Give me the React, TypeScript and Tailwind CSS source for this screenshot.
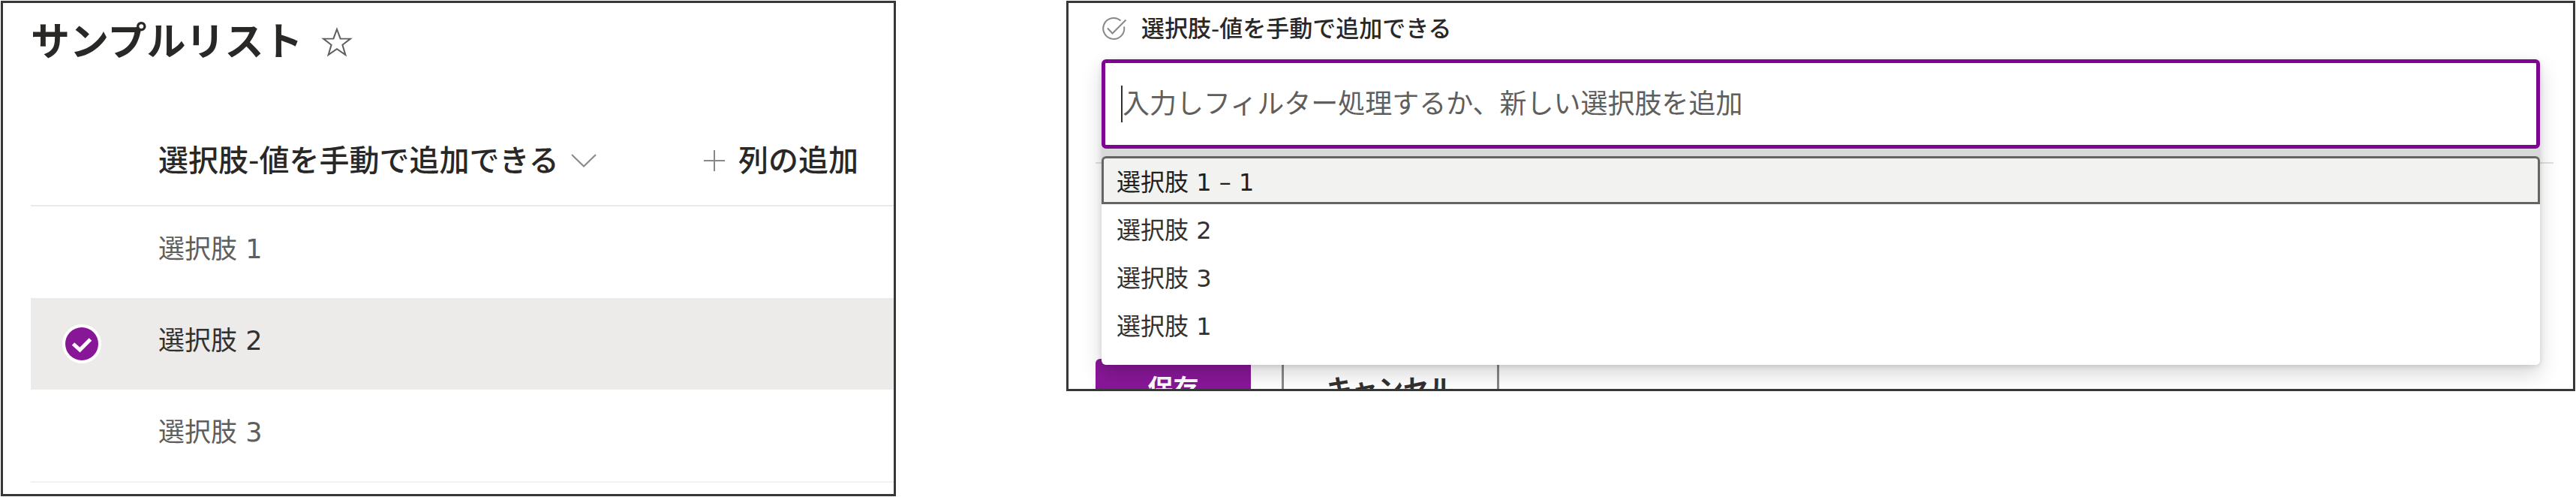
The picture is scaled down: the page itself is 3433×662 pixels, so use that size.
import { useState } from "react";

const rows = ["選択肢 1", "選択肢 2", "選択肢 3"];
const options = ["選択肢 1 – 1", "選択肢 2", "選択肢 3", "選択肢 1"];

function StarIcon() {
  return (
    <svg viewBox="0 0 44 44" className="size-11" fill="none" stroke="#605e5c" strokeWidth="2" aria-hidden="true">
      <path d="M22 5 L26.6 17.4 L40 17.6 L29.4 25.8 L33.4 39 L22 31.2 L10.6 39 L14.6 25.8 L4 17.6 L17.4 17.4 Z" />
    </svg>
  );
}

function ChevronIcon() {
  return (
    <svg viewBox="0 0 34 18" className="h-[18px] w-[34px]" fill="none" stroke="#8a8886" strokeWidth="2" aria-hidden="true">
      <path d="M1 1 L17 16.5 L33 1" />
    </svg>
  );
}

function PlusIcon() {
  return (
    <svg viewBox="0 0 28 28" className="size-7" fill="none" stroke="#8a8886" strokeWidth="2" aria-hidden="true">
      <path d="M14 0 V28 M0 14 H28" />
    </svg>
  );
}

function CheckBadge() {
  return (
    <svg viewBox="0 0 52 52" className="size-[52px] opacity-0 peer-checked:opacity-100" aria-hidden="true">
      <circle cx="26" cy="26" r="26" fill="#ffffff" />
      <circle cx="26" cy="26" r="22" fill="#881798" />
      <path d="M14.5 26 L23.5 34 L37.5 20" fill="none" stroke="#ffffff" strokeWidth="5" />
    </svg>
  );
}

function ChoiceIcon() {
  return (
    <svg viewBox="0 0 34 32" className="h-8 w-[34px]" fill="none" stroke="#8a8886" strokeWidth="2" aria-hidden="true">
      <path d="M25.5 5.5 A14 14 0 1 0 30 13.5" />
      <path d="M8 15.5 L14.5 22.5 L32.5 4.5" />
    </svg>
  );
}

function ListPanel() {
  const [selected, setSelected] = useState<number | null>(1);
  return (
    <section className="border-[3px] border-[#353837] bg-white pt-[22px] pb-[15px] pl-[37px]">
      <div className="flex items-center gap-6">
        <h1 className="text-[52px] leading-[60px] font-bold text-[#292827]">サンプルリスト</h1>
        <button type="button" aria-label="お気に入り">
          <StarIcon />
        </button>
      </div>
      <table className="mt-[65px] w-full border-separate border-spacing-0 text-left">
        <thead>
          <tr className="h-[124px] text-[40px] leading-[48px] text-[#292827]">
            <td className="w-[170px] border-b-2 border-[#eaeae8]" />
            <th scope="col" className="w-[727px] border-b-2 border-[#eaeae8] p-0 pt-1 font-medium">
              <button type="button" className="flex items-center gap-4 whitespace-nowrap">
                選択肢-値を手動で追加できる
                <ChevronIcon />
              </button>
            </th>
            <th scope="col" className="border-b-2 border-[#eaeae8] p-0 pt-1 font-medium">
              <button type="button" className="flex items-center gap-[18px] whitespace-nowrap">
                <PlusIcon />
                列の追加
              </button>
            </th>
          </tr>
        </thead>
        <tbody>
          {rows.map((name, i) => {
            const on = selected === i;
            return (
              <tr
                key={name}
                className={
                  on
                    ? "h-[122px] bg-[#ecebe9] text-[#323130]"
                    : "h-[122px] text-[#605e5c] last:h-[124px] last:*:border-b-2 last:*:border-[#f2f2f2]"
                }
              >
                <td className="p-0">
                  <label className="flex w-[136px] justify-center">
                    <input
                      type="checkbox"
                      className="peer sr-only"
                      aria-label={name}
                      checked={on}
                      onChange={() => setSelected(on ? null : i)}
                    />
                    <CheckBadge />
                  </label>
                </td>
                <td colSpan={2} className="p-0 pb-2 text-[35px] leading-[48px]">
                  {name}
                </td>
              </tr>
            );
          })}
        </tbody>
      </table>
    </section>
  );
}

function FormPanel() {
  const [value, setValue] = useState("");
  return (
    <section className="overflow-hidden border-[3px] border-[#353837] bg-white pt-[14px] pr-[26px] pl-9">
      <div className="relative z-10 pr-[18px] pl-2">
        <div className="flex h-10 items-center gap-[19px]">
          <ChoiceIcon />
          <label htmlFor="choice" className="text-[31px] leading-10 font-medium text-[#292827]">
            選択肢-値を手動で追加できる
          </label>
        </div>
        <div className="relative mt-[21px]">
          <div className="relative z-10 flex h-[119px] items-center rounded-md border-[5px] border-[#7e0592] bg-white pl-[21px]">
            <span className="h-[49px] w-[2px] bg-[#323130]" />
            <input
              id="choice"
              type="text"
              role="combobox"
              aria-expanded="true"
              aria-controls="choice-list"
              value={value}
              onChange={(e) => setValue(e.target.value)}
              placeholder="入力しフィルター処理するか、新しい選択肢を追加"
              className="h-14 min-w-0 flex-1 text-[36px] text-[#323130] outline-none placeholder:text-[#605e5c]"
            />
          </div>
          <div className="absolute inset-x-0 top-0 rounded-md pt-[129px] shadow-[0_12px_28px_rgba(0,0,0,0.16),0_2px_7px_rgba(0,0,0,0.12)]">
            <div className="absolute inset-x-0 top-[110px] h-6 bg-[#d9d9d9]" />
            <div
              id="choice-list"
              role="listbox"
              aria-label="選択肢"
              className="relative rounded-md bg-white pb-[22px]"
            >
              {options.map((name, i) => (
                <button
                  key={name}
                  type="button"
                  role="option"
                  aria-selected={i === 0}
                  className="flex h-16 w-full items-center border-[3px] border-transparent pt-1.5 pl-[17px] text-left text-[32px] leading-10 text-[#323130] first:rounded-t-md aria-selected:border-[#666564] aria-selected:bg-[#f2f2f0] aria-selected:text-[#201f1e]"
                >
                  {name}
                </button>
              ))}
            </div>
          </div>
        </div>
      </div>
      <hr className="mt-[18px] border-t-2 border-[#e1e1e1]" />
      <div className="mt-[260px] flex h-10 items-start gap-[41px] overflow-hidden text-[34px] leading-10 font-bold">
        <button type="button" className="h-20 w-[207px] shrink-0 rounded-md bg-[#881798] text-white">
          保存
        </button>
        <button
          type="button"
          className="h-20 w-[290px] shrink-0 rounded-md border-[3px] border-[#8a8886] bg-white text-[#323130]"
        >
          キャンセル
        </button>
      </div>
    </section>
  );
}

export default function App() {
  return (
    <main
      lang="ja"
      className="grid grid-cols-[1193fr_2011fr] items-start gap-[227px] bg-white p-px font-['DejaVu_Sans','Noto_Sans_CJK_JP',sans-serif]"
    >
      <ListPanel />
      <FormPanel />
    </main>
  );
}
